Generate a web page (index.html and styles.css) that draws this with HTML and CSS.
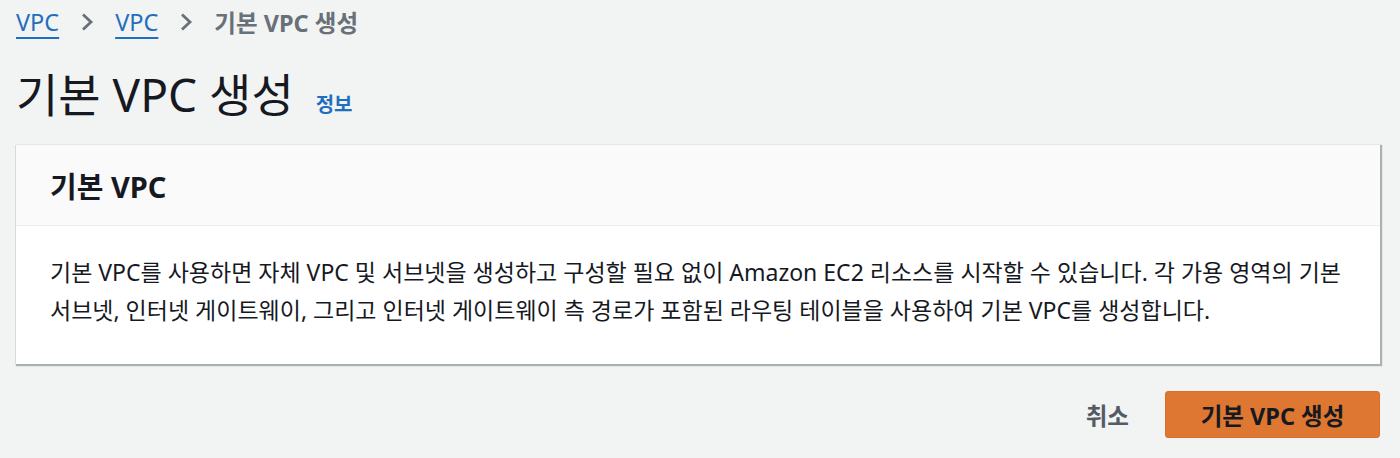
FILE: index.html
```html
<!DOCTYPE html>
<html lang="ko">
<head>
<meta charset="utf-8">
<link rel="stylesheet" href="styles.css">
</head>
<body>
<div class="page">
  <nav class="crumbs">
    <a class="crumb-link" href="#">VPC</a>
    <svg class="chev" width="16" height="22" viewBox="0 0 16 22"><path d="M4 3.5 L12 11 L4 18.5" fill="none" stroke="#687078" stroke-width="2.8"/></svg>
    <a class="crumb-link" href="#">VPC</a>
    <svg class="chev" width="16" height="22" viewBox="0 0 16 22"><path d="M4 3.5 L12 11 L4 18.5" fill="none" stroke="#687078" stroke-width="2.8"/></svg>
    <span class="crumb-current">기본 VPC 생성</span>
  </nav>
  <div class="title-row">
    <h1 class="title">기본 VPC 생성</h1>
    <a class="info" href="#">정보</a>
  </div>
  <section class="card">
    <div class="card-head"><h2 class="card-title">기본 VPC</h2></div>
    <div class="card-body">
      <p class="desc">기본 VPC를 사용하면 자체 VPC 및 서브넷을 생성하고 구성할 필요 없이 Amazon EC2 리소스를 시작할 수 있습니다. 각 가용 영역의 기본 서브넷, 인터넷 게이트웨이, 그리고 인터넷 게이트웨이 측 경로가 포함된 라우팅 테이블을 사용하여 기본 VPC를 생성합니다.</p>
    </div>
  </section>
  <div class="actions">
    <button class="btn-cancel">취소</button>
    <button class="btn-primary">기본 VPC 생성</button>
  </div>
</div>
</body>
</html>
```
FILE: styles.css
```css
* { box-sizing: border-box; }
html, body { margin: 0; padding: 0; }
body {
  background: #f2f3f3;
  font-family: "Noto Sans", "Noto Sans CJK KR", sans-serif;
  color: #16191f;
  width: 1400px;
  height: 458px;
  overflow: hidden;
}
.page { padding: 5px 20px 0 16px; }
.crumbs {
  display: flex;
  align-items: center;
  gap: 20px;
  height: 34px;
  font-size: 23.5px;
}
.crumb-link {
  color: #1f6fbf;
  text-decoration: underline;
  text-underline-offset: 6px;
  text-decoration-thickness: 2px;
}
.crumb-current { color: #687078; font-weight: 700; }
.chev { display: block; }
.title-row {
  display: flex;
  align-items: baseline;
  gap: 22px;
  margin-top: 22px;
  height: 66px;
}
.title {
  margin: 0;
  font-size: 46px;
  font-weight: 400;
  line-height: 66px;
}
.info {
  color: #1f6fbf;
  font-size: 20px;
  font-weight: 700;
  text-decoration: none;
}
.card {
  margin-top: 18px;
  background: #fff;
  box-shadow: -1px 0 0 #d5dbdb, 1px 1px 1px 1px rgba(0,28,36,0.3);
}
.card-head {
  background: #fafafa;
  border-bottom: 1px solid #eaeded;
  height: 81px;
  display: flex;
  align-items: center;
  padding-left: 34px;
}
.card-title {
  margin: 0;
  font-size: 29px;
  font-weight: 700;
}
.card-body { padding: 27px 22px 35px 34px; }
.desc {
  margin: 0;
  font-size: 23px;
  line-height: 38px;
}
.actions {
  display: flex;
  justify-content: flex-end;
  align-items: center;
  gap: 36px;
  margin-top: 27px;
}
.btn-cancel {
  background: none;
  border: none;
  padding: 0;
  font-family: inherit;
  font-size: 23.5px;
  font-weight: 700;
  color: #545b64;
}
.btn-primary {
  width: 215px;
  height: 47px;
  background: #dd7731;
  border: 1px solid #d6712c;
  border-radius: 3px;
  font-family: inherit;
  font-size: 23.5px;
  font-weight: 700;
  color: #16191f;
}
```
